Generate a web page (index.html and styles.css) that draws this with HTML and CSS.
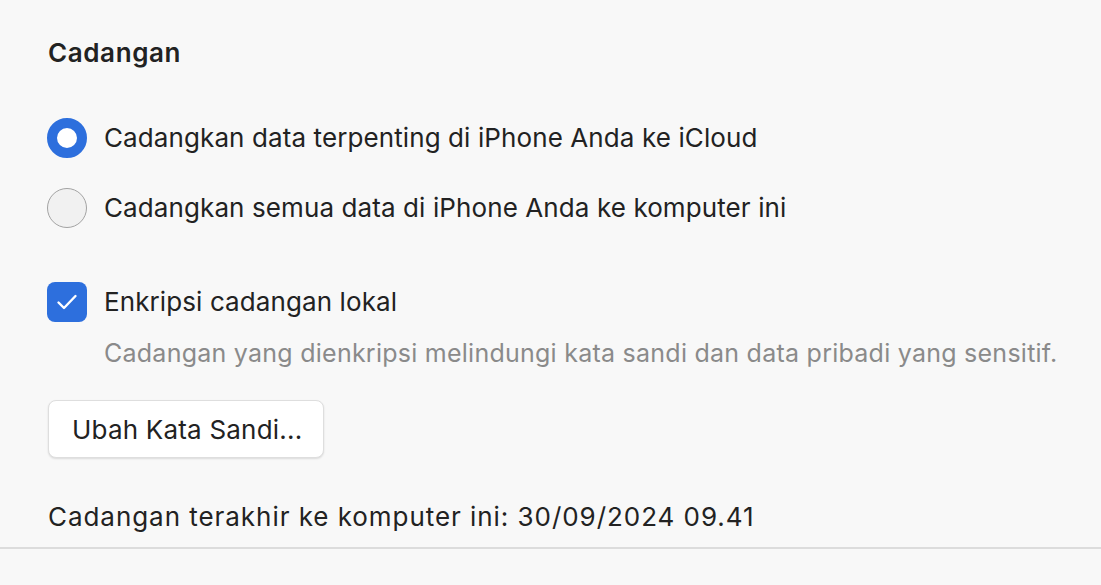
FILE: index.html
```html
<!DOCTYPE html>
<html lang="id">
<head>
    <meta charset="UTF-8">
    <title>Cadangan</title>
    <link rel="stylesheet" href="styles.css">
</head>
<body>
    <section class="backup-panel">
        <h2 class="panel-title">Cadangan</h2>

        <div class="options">
            <label class="option">
                <span class="radio checked"></span>
                <span>Cadangkan data terpenting di iPhone Anda ke iCloud</span>
            </label>
            <label class="option">
                <span class="radio"></span>
                <span>Cadangkan semua data di iPhone Anda ke komputer ini</span>
            </label>
        </div>

        <label class="option encrypt">
            <span class="checkbox">
                <svg width="40" height="40" viewBox="0 0 40 40">
                    <path d="M11.5 20.5 L17 26 L28.5 14" fill="none" stroke="#fff" stroke-width="2.4" stroke-linecap="round" stroke-linejoin="round"/>
                </svg>
            </span>
            <span>Enkripsi cadangan lokal</span>
        </label>
        <p class="hint">Cadangan yang dienkripsi melindungi kata sandi dan data pribadi yang sensitif.</p>

        <button class="btn">Ubah Kata Sandi...</button>

        <p class="last-backup">Cadangan terakhir ke komputer ini: 30/09/2024 09.41</p>
    </section>
</body>
</html>
```

FILE: styles.css
```css
* {
    margin: 0;
    padding: 0;
    box-sizing: border-box;
}

body {
    font-family: Inter, "Liberation Sans", sans-serif;
    background: #f8f8f8;
    color: #222;
    width: 1101px;
    height: 585px;
    overflow: hidden;
}

.backup-panel {
    padding: 38px 0 0 47px;
    height: 549px;
    border-bottom: 2px solid #dcdcdc;
}

.panel-title {
    font-size: 26px;
    font-weight: 600;
    line-height: 30px;
    letter-spacing: 0.6px;
    margin: 0 0 50px 1px;
}

.options {
    display: flex;
    flex-direction: column;
    gap: 30px;
    margin-bottom: 54px;
}

.option {
    display: flex;
    align-items: center;
    gap: 17px;
    font-size: 26px;
    line-height: 40px;
    letter-spacing: 0.1px;
}

.radio {
    width: 40px;
    height: 40px;
    border-radius: 50%;
    border: 1.5px solid #a3a3a3;
    background: #f1f1f1;
    flex-shrink: 0;
}

.radio.checked {
    border: 10px solid #2d6fdd;
    background: #fff;
}

.checkbox {
    width: 40px;
    height: 40px;
    border-radius: 8px;
    background: #2d6fdd;
    display: flex;
    flex-shrink: 0;
}

.hint {
    margin: 16px 0 0 57px;
    font-size: 25px;
    line-height: 30px;
    letter-spacing: 0.25px;
    color: #8a8a8a;
}

.btn {
    margin: 32px 0 0 1px;
    width: 276px;
    height: 58px;
    padding: 0 0 0 23px;
    text-align: left;
    background: #fff;
    border: 1px solid #dedede;
    border-radius: 8px;
    box-shadow: 0 1px 2px rgba(0, 0, 0, 0.12);
    font-family: inherit;
    font-size: 26px;
    letter-spacing: 0.2px;
    color: #222;
}

.last-backup {
    margin: 44px 0 0 1px;
    font-size: 26px;
    line-height: 30px;
    letter-spacing: 0.95px;
}
```
